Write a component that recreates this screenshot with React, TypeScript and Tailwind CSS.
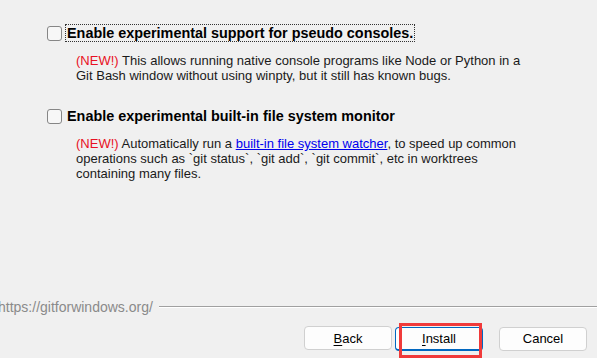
import React from "react";

const font = "font-['Liberation_Sans',Arial,sans-serif]";

const Checkbox: React.FC = () => (
  <span className="w-[15px] h-[15px] shrink-0 rounded-[3px] border border-[#868686] bg-[#f7f7f7]" />
);

interface OptionProps {
  label: string;
  focused?: boolean;
  children: React.ReactNode;
}

const Option: React.FC<OptionProps> = ({ label, focused, children }) => (
  <div>
    <div className="flex items-center gap-[3px]">
      <Checkbox />
      <span
        className={`text-[14.4px] font-bold text-black leading-[16px] px-[1px] border border-dotted ${
          focused ? "border-[#333]" : "border-transparent"
        }`}
      >
        {label}
      </span>
    </div>
    <p className="mt-[11px] ml-[29px] text-[13px] leading-[15px] text-[#1a1a1a]">
      {children}
    </p>
  </div>
);

const New = () => <span className="text-[#e81123]">(NEW!)</span>;

const Button: React.FC<{ label: string; accel: string; primary?: boolean }> = ({
  label,
  accel,
  primary,
}) => {
  const rest = label.slice(accel.length);
  return (
    <button
      className={`w-[88px] h-[24px] rounded-[4px] bg-[#fdfdfd] text-[13px] text-black ${
        primary
          ? "border border-[#0067c0] border-b-2"
          : "border border-[#d0d0d0]"
      }`}
    >
      <span className="underline decoration-1 underline-offset-2">{accel}</span>
      {rest}
    </button>
  );
};

export default function App() {
  return (
    <div className={`w-[605px] h-[358px] flex overflow-hidden ${font}`}>
      <div className="relative w-[597px] h-full bg-[#f0f0f0] flex flex-col">
        <div className="pl-[47px] pt-[24px] flex flex-col gap-[24px]">
          <Option label="Enable experimental support for pseudo consoles." focused>
            <New /> This allows running native console programs like Node or Python in a
            <br />
            Git Bash window without using winpty, but it still has known bugs.
          </Option>
          <Option label="Enable experimental built-in file system monitor">
            <New /> Automatically run a{" "}
            <span className="text-[#0000ee] underline">built-in file system watcher</span>, to
            speed up common
            <br />
            operations such as `git status`, `git add`, `git commit`, etc in worktrees
            <br />
            containing many files.
          </Option>
        </div>

        <div className="mt-auto">
          <div className="flex items-center gap-[6px] ml-[-2px]">
            <span className="text-[14px] text-[#8a8a8a] leading-[14px]">
              https://gitforwindows.org/
            </span>
            <div className="flex-1 border-t border-[#a0a0a0] border-b border-b-white mt-[1px]" />
          </div>
          <div className="flex justify-end items-center pr-[10px] pt-[12px] pb-[7px]">
            <Button label="Back" accel="B" />
            <div className="ml-[3px]">
              <Button label="Install" accel="I" primary />
            </div>
            <div className="ml-[16px]">
              <Button label="Cancel" accel="" />
            </div>
          </div>
        </div>

        <div className="absolute left-[399px] top-[323px] w-[83px] h-[35px] border-[3px] border-[#f03a3a]" />
      </div>
      <div className="flex-1 bg-white" />
    </div>
  );
}
